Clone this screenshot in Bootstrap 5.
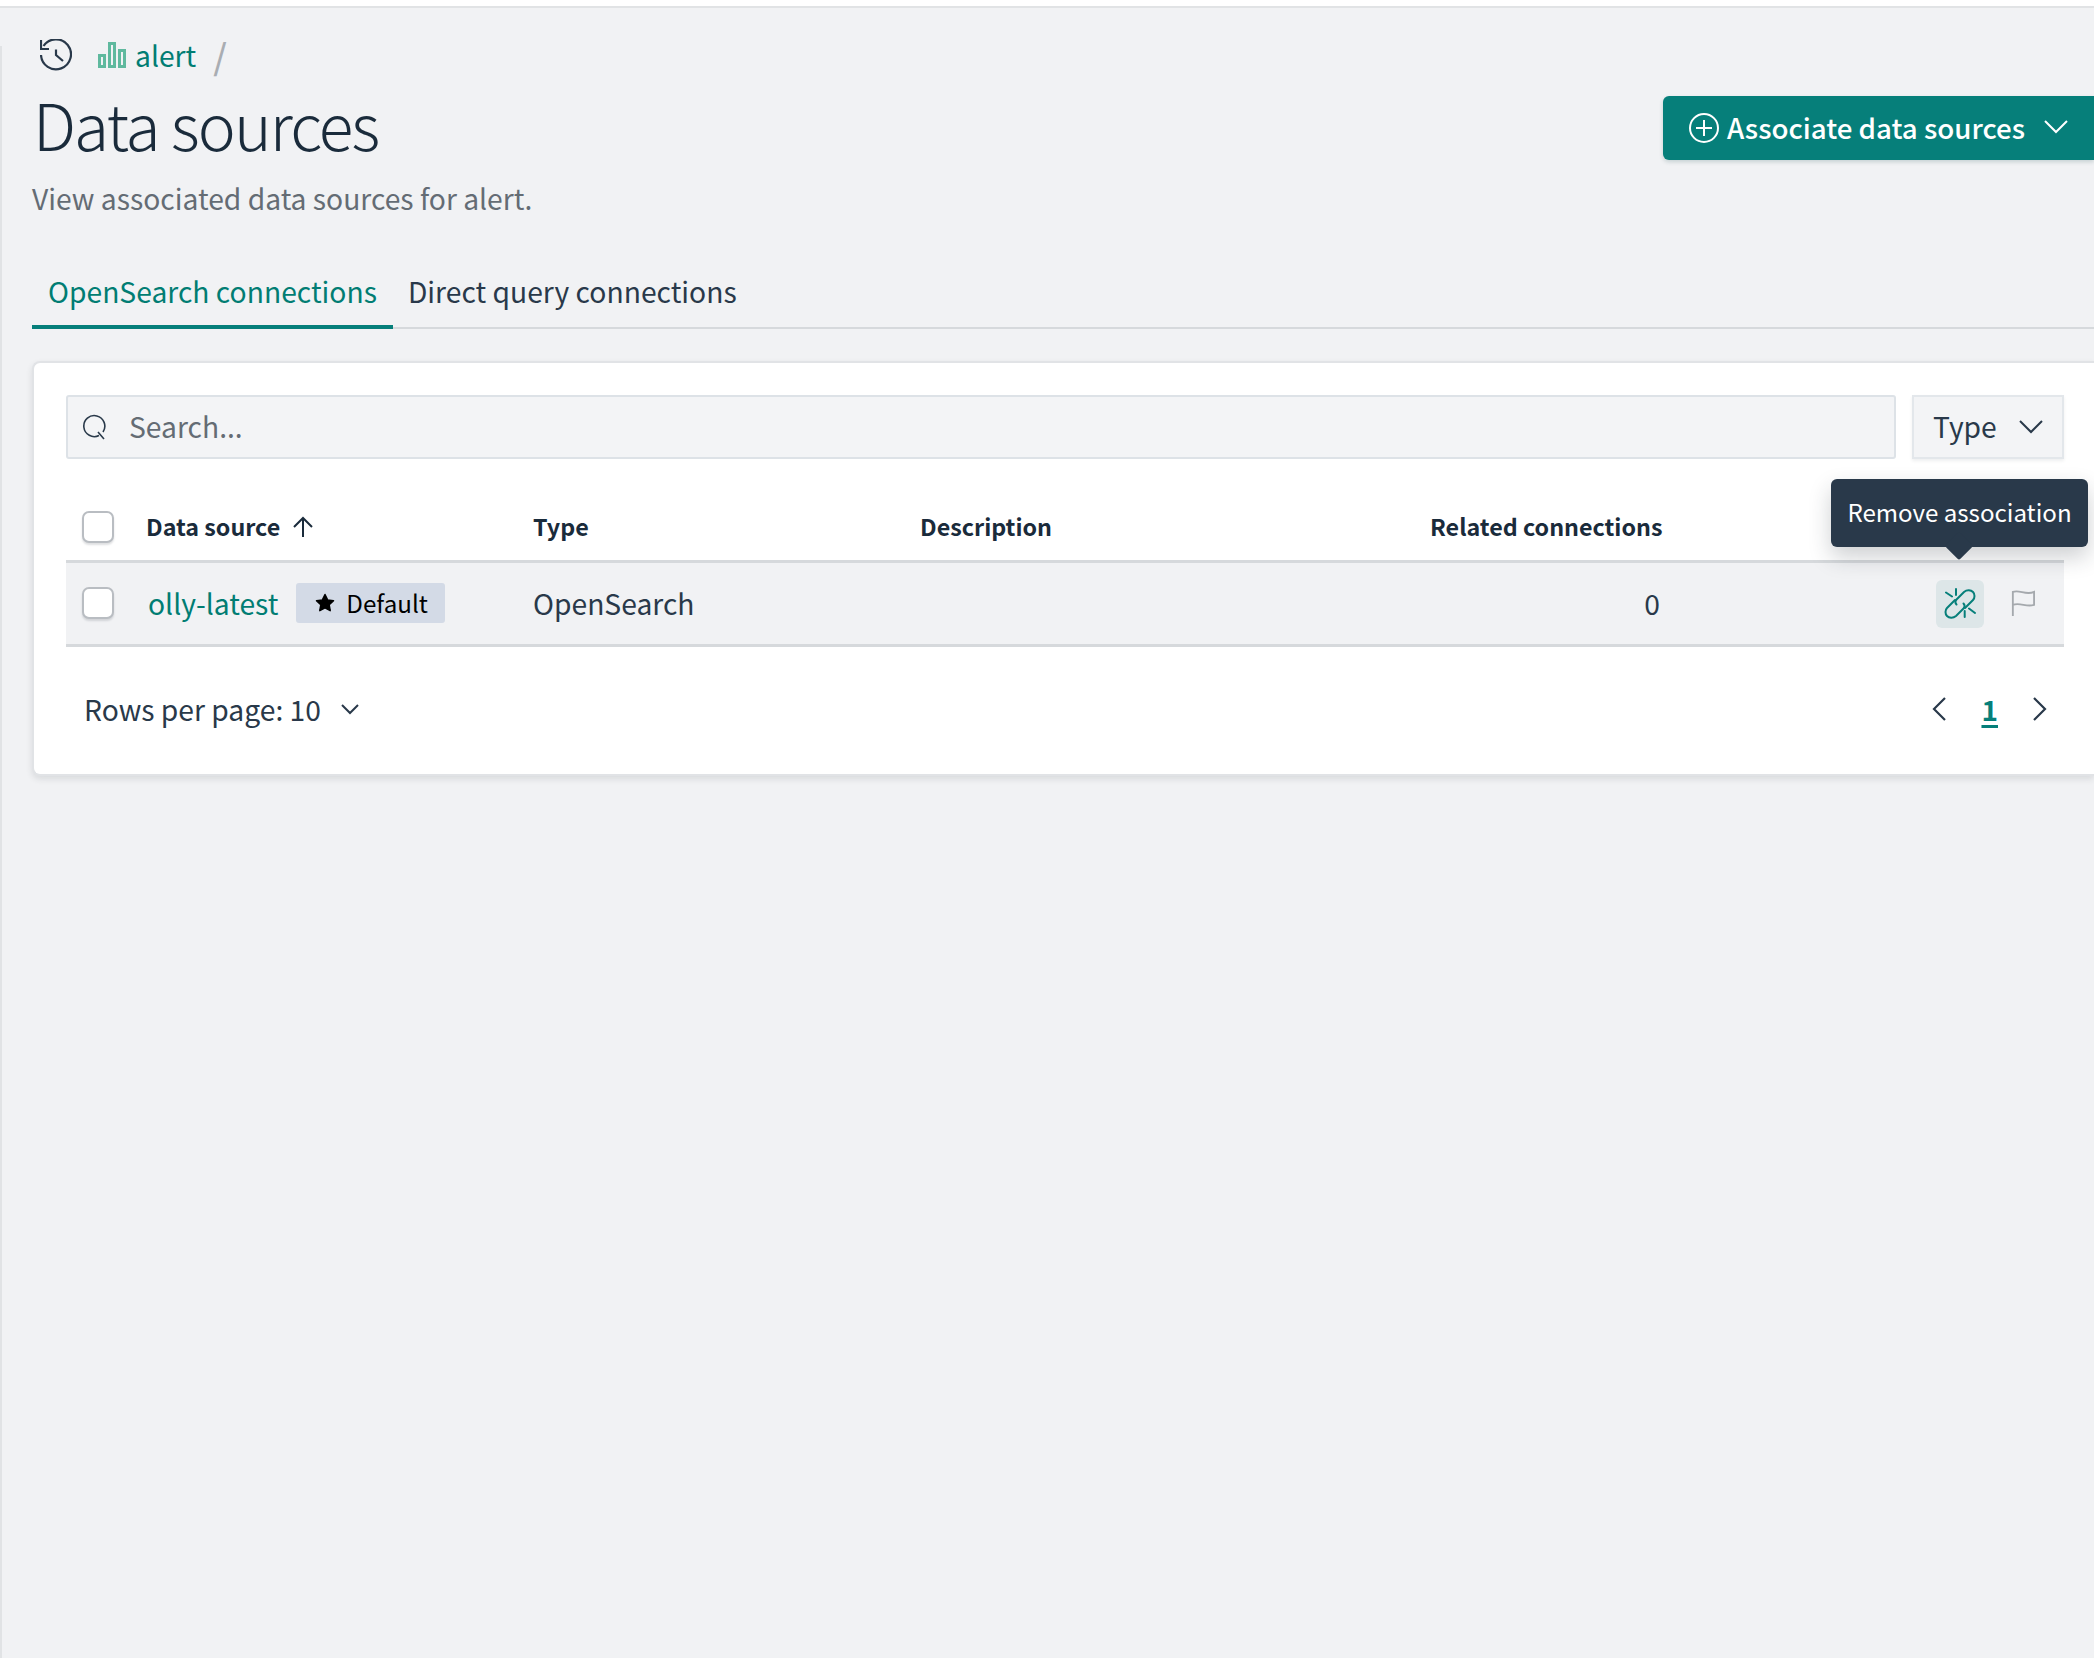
<!DOCTYPE html>
<html lang="en">
  <head>
    <meta charset="UTF-8" />
    <meta name="viewport" content="width=device-width, initial-scale=1.0" />
    <title>Data sources</title>
    <link href="https://cdn.jsdelivr.net/npm/bootstrap@5.3.3/dist/css/bootstrap.min.css" rel="stylesheet" />
    <style>
      html, body { height: 100%; }
      body {
        font-family: "Noto Sans CJK SC", "Open Sans", sans-serif;
        background: #fff;
        color: #29394a;
        overflow: hidden;
      }
      svg { display: block; flex: none; }

      .app-frame {
        position: relative;
        margin-top: 6px;
        height: calc(100% - 6px);
        background: #f1f2f4;
        border-top: 2px solid #e1e3e5;
        padding-left: 32px;
      }
      .app-frame::before {
        content: ""; position: absolute; left: 0; top: 38px; bottom: 0;
        width: 2px; background: #e1e3e5;
      }

      /* Crumbs */
      .crumbs { height: 46px; margin-top: 24px; font-size: 28.250px; line-height: 46px; }
      .crumb-link { color: #017d73; margin-left: 9px; text-decoration: none; }
      .crumb-slash { color: #a9adb2; margin-left: 17px; font-size: 35px; font-weight: 500; }

      /* Heading */
      .page-title { font-size: 64px; line-height: 72px; font-weight: 300; letter-spacing: -1.9px; color: #1a2b3b; margin: 9px 0 0 1px; }
      .page-sub { font-size: 28.250px; line-height: 40px; color: #646c74; margin: 19px 0 0 0; }
      .assoc-btn {
        width: 431px; height: 64px; margin-top: 18px;
        background: #067f7a; color: #fff;
        font-size: 27.700px; line-height: 40px; font-weight: 500;
        white-space: nowrap;
        border: 0; border-radius: 6px 0 0 6px;
        box-shadow: 0 2px 4px rgba(0, 60, 60, .18);
        padding: 0 26px 2px 26px;
      }

      /* Tabs */
      .ds-tabs { margin-top: 41px; height: 70px; border-bottom: 2px solid #d6d9dc; }
      .ds-tab { font-size: 28.250px; line-height: 40px; padding: 12px 16px 0; color: #29394a; text-decoration: none; height: 70px; margin-bottom: -2px; }
      .ds-tab.is-on { color: #017d73; border-bottom: 4px solid #067f7a; }

      /* Panel */
      .ds-panel {
        margin-top: 32px; height: 415px;
        background: #fff;
        border: 2px solid #e1e3e6; border-right: 0;
        border-radius: 8px 0 0 8px;
        box-shadow: 0 3px 6px rgba(40, 50, 60, .12);
        padding: 32px 30px 0 32px;
      }
      .ds-search {
        height: 64px; background: #f3f4f6;
        border: 2px solid #dde2e7; border-radius: 3px;
        padding-left: 14px; gap: 21px;
        font-size: 28.250px; color: #646c74;
      }
      .ds-search span, .ds-filter span { padding-bottom: 2px; }
      .ds-filter {
        width: 152px; height: 64px; margin-left: 16px;
        background: #f3f4f6; border: 2px solid #e3e7eb;
        box-shadow: 0 2px 3px rgba(40, 50, 60, .08);
        padding: 0 19px 0 19px; font-size: 28.250px; color: #29394a;
      }

      /* Table */
      .ds-table { table-layout: fixed; margin: 35px 0 0; width: 100%; }
      .ds-table th, .ds-table td { padding: 0; vertical-align: middle; color: #29394a; box-shadow: none; background: transparent; }
      .ds-table thead th { height: 67px; font-size: 23.300px; font-weight: 600; color: #1a2b3b; border-bottom: 3px solid #d6d9dc; white-space: nowrap; }
      .ds-table tbody td { height: 84px; font-size: 28.250px; background: #f1f2f4; border-bottom: 3px solid #d6d9dc; }
      .ds-check {
        display: block; width: 32px; height: 32px; margin-left: 16px;
        background: #fff; border: 2px solid #b9bdc2; border-radius: 7px;
        box-shadow: 0 2px 2px rgba(40, 50, 60, .15);
      }
      .ds-name { color: #017d73; text-decoration: none; margin-left: 2px; }
      .ds-default {
        background: #d3dae6; color: #000; border-radius: 3px;
        height: 40px; padding: 0 17px 0 19px; gap: 11px;
        margin-left: 18px; font-size: 24.200px; font-weight: 400;
      }
      .act-btn { width: 48px; height: 48px; margin-top: 2px; background: #dde6e8; border-radius: 6px; }

      /* Footer */
      .ds-foot { height: 125px; font-size: 28.250px; color: #29394a; padding-left: 18px; }
      .page-no { color: #067f7a; font-weight: 700; font-size: 28px; text-decoration: underline; text-underline-offset: 4px; text-decoration-thickness: 3px; }

      /* Tooltip */
      .ds-hint {
        position: absolute; left: 1797px; top: 116px;
        width: 257px; height: 68px;
        background: #29394a; color: #fff; border-radius: 6px;
        font-size: 24.100px; line-height: 66px; text-align: center;
        box-shadow: 0 10px 22px rgba(30, 40, 50, .22);
      }
      .ds-hint::after {
        content: ""; position: absolute; left: 118px; bottom: -9px;
        width: 20px; height: 20px; background: #29394a;
        transform: rotate(45deg); border-radius: 2px;
      }
    </style>
  </head>
  <body>
    <div class="app-frame">
      <div class="crumbs d-flex align-items-center">
        <svg width="32" height="32" viewBox="0 0 32 32" fill="none" stroke="#29394a" stroke-width="2.200" style="margin-left:8px">
          <path d="M1 1v9h8" />
          <path d="M3.500 7A15 15 0 1 1 1 16" />
          <path d="M16 10.500V16l7 6" />
        </svg>
        <svg width="28" height="26" viewBox="0 0 28 26" fill="none" stroke="#5fb99e" stroke-width="3" style="margin-left:26px">
          <rect x="1.500" y="13.500" width="5" height="11" />
          <rect x="11.500" y="1.500" width="5" height="23" />
          <rect x="21.500" y="8.500" width="5" height="16" />
        </svg>
        <a class="crumb-link" href="#">alert</a>
        <span class="crumb-slash">/</span>
      </div>

      <div class="d-flex justify-content-between align-items-start">
        <div>
          <h1 class="page-title">Data sources</h1>
          <p class="page-sub">View associated data sources for alert.</p>
        </div>
        <button class="assoc-btn d-flex align-items-center" type="button">
          <svg width="30" height="30" viewBox="0 0 30 30" fill="none" stroke="#fff" stroke-width="2" style="margin-right:8px;margin-top:2px">
            <circle cx="15" cy="15" r="14" /><path d="M15 7v16M7 15h16" />
          </svg>
          <span class="flex-grow-1 text-start">Associate data sources</span>
          <svg width="24" height="14" viewBox="0 0 24 14" fill="none" stroke="#fff" stroke-width="2"><path d="M1 1l11 11L23 1" /></svg>
        </button>
      </div>

      <div class="ds-tabs d-flex">
        <a class="ds-tab is-on" href="#">OpenSearch connections</a>
        <a class="ds-tab" style="padding-left:15px" href="#">Direct query connections</a>
      </div>

      <div class="ds-panel position-relative">
        <div class="d-flex">
          <div class="ds-search d-flex align-items-center flex-grow-1">
            <svg width="26" height="26" viewBox="0 0 26 26" fill="none" stroke="#29394a" stroke-width="1.600"><path d="M17 21.500A10.500 10.500 0 1 1 21 18M16 18l6 7" /></svg>
            <span>Search...</span>
          </div>
          <div class="ds-filter d-flex align-items-center justify-content-between">
            <span>Type</span>
            <svg width="24" height="14" viewBox="0 0 24 14" fill="none" stroke="#29394a" stroke-width="2"><path d="M1 1l11 11L23 1" /></svg>
          </div>
        </div>

        <table class="table ds-table">
          <colgroup>
            <col style="width:80px" /><col style="width:387px" /><col style="width:387px" /><col style="width:510px" /><col style="width:230px" /><col />
          </colgroup>
          <thead>
            <tr>
              <th><span class="ds-check"></span></th>
              <th>
                <div class="d-flex align-items-center gap-2">Data source
                  <svg width="22" height="22" viewBox="0 0 22 22" fill="none" stroke="#1a2b3b" stroke-width="2" style="margin-left:4px"><path d="M11 21V2M2 11l9-9 9 9" /></svg>
                </div>
              </th>
              <th>Type</th>
              <th>Description</th>
              <th class="text-end">Related connections</th>
              <th></th>
            </tr>
          </thead>
          <tbody>
            <tr>
              <td><span class="ds-check"></span></td>
              <td>
                <div class="d-flex align-items-center">
                  <a class="ds-name" href="#">olly-latest</a>
                  <span class="ds-default d-inline-flex align-items-center">
                    <svg width="20" height="20" viewBox="0 0 20 20" fill="#000" stroke="#000" stroke-width="1.500" stroke-linejoin="round"><path d="M10 1.500l2.600 5.400 5.900.8-4.300 4.100 1 5.900-5.200-2.800-5.200 2.800 1-5.900L1.500 7.700l5.900-.8z" /></svg>
                    Default
                  </span>
                </div>
              </td>
              <td>OpenSearch</td>
              <td></td>
              <td class="text-end">0</td>
              <td>
                <div class="d-flex align-items-center justify-content-end" style="gap:27px;padding-right:29px">
                  <span class="act-btn d-flex align-items-center justify-content-center">
                    <svg width="32" height="32" viewBox="0 0 32 32" fill="none" stroke="#067f7a" stroke-width="2" stroke-linecap="round">
                      <path d="M12.500 16.500C11 15 11 13 12.500 11.500L20 4C23 1.500 27 2 29 4C31 6 31 10 29 12L21 20" />
                      <path d="M19.500 15.500C21 17 21 19 19.500 20.500L12 28C9 30.500 5 30 3 28C1 26 1 22 3 20L11 12" />
                      <path d="M2 4.500l6 4M12 1v6M20.700 23v6M25 20.500l6 4.500" />
                    </svg>
                  </span>
                  <svg width="24" height="30" viewBox="0 0 26 30" fill="none" stroke="#a5a9ad" stroke-width="2">
                    <path d="M2 29V3c7-3 14 4 23 0v14c-8 3-15-3-23 0" />
                  </svg>
                </div>
              </td>
            </tr>
          </tbody>
        </table>

        <div class="ds-foot d-flex align-items-center justify-content-between">
          <div class="d-flex align-items-center" style="gap:20px">
            <span>Rows per page: 10</span>
            <svg width="18" height="11" viewBox="0 0 18 11" fill="none" stroke="#29394a" stroke-width="2"><path d="M1 1l8 8 8-8" /></svg>
          </div>
          <div class="d-flex align-items-center" style="gap:35px;padding-right:17px">
            <svg width="14" height="24" viewBox="0 0 14 24" fill="none" stroke="#29394a" stroke-width="2.200"><path d="M13 1 2 12l11 11" /></svg>
            <a class="page-no" href="#">1</a>
            <svg width="14" height="24" viewBox="0 0 14 24" fill="none" stroke="#29394a" stroke-width="2.200"><path d="M1 1l11 11L1 23" /></svg>
          </div>
        </div>

        <div class="ds-hint">Remove association</div>
      </div>
    </div>
    <script src="https://cdn.jsdelivr.net/npm/bootstrap@5.3.3/dist/js/bootstrap.bundle.min.js"></script>
  </body>
</html>
